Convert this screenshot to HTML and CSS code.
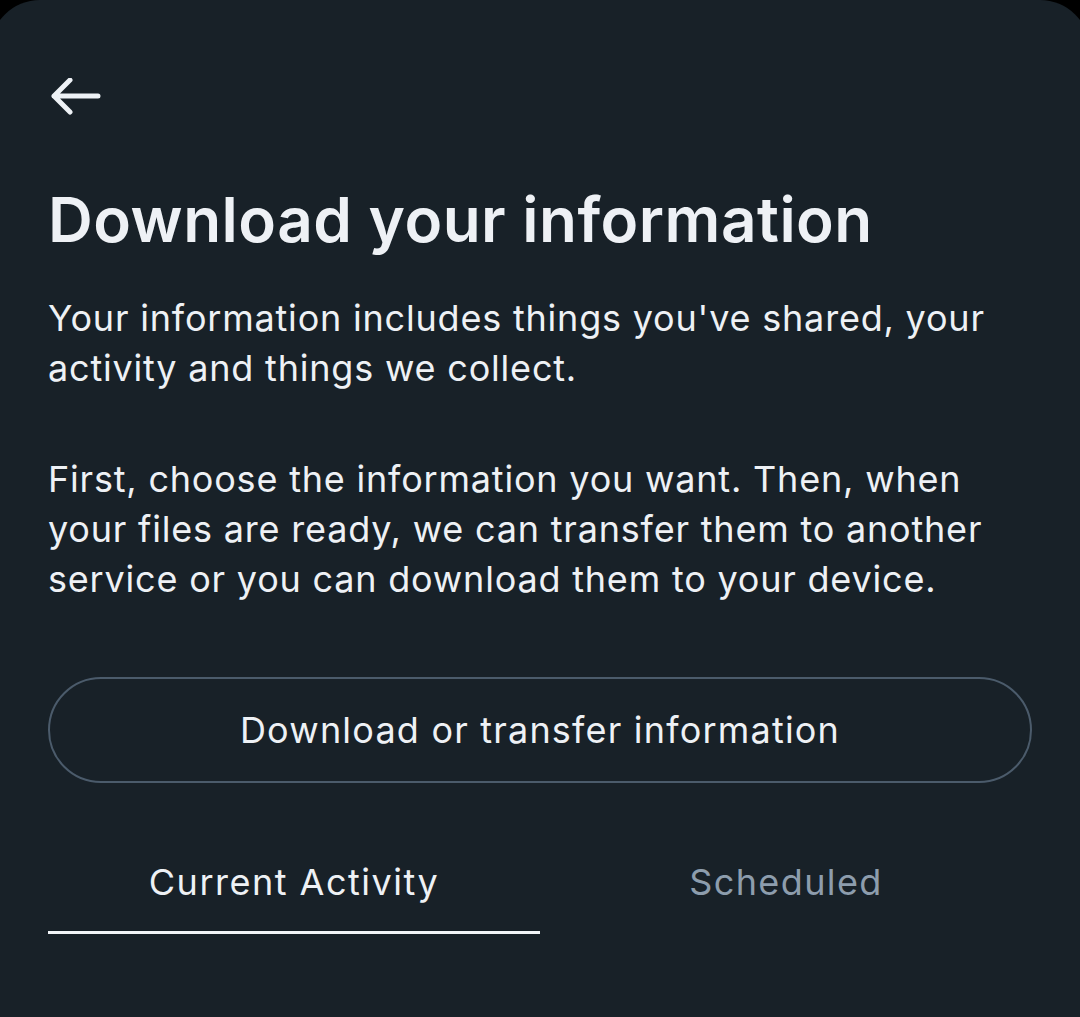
FILE: index.html
```html
<!DOCTYPE html>
<html lang="en">
<head>
<meta charset="utf-8">
<link rel="stylesheet" href="styles.css">
</head>
<body>
<div class="sheet">
  <div class="topbar">
    <svg class="back" width="52" height="40" viewBox="0 0 52 40" aria-hidden="true">
      <path d="M4 18 H48 M20 2 L4 18 L20 34" fill="none" stroke="#eef2f6" stroke-width="5" stroke-linecap="round" stroke-linejoin="round"/>
    </svg>
  </div>
  <h1 class="title">Download your information</h1>
  <p class="para">Your information includes things you've shared, your activity and things we collect.</p>
  <p class="para">First, choose the information you want. Then, when your files are ready, we can transfer them to another service or you can download them to your device.</p>
  <button class="btn">Download or transfer information</button>
  <div class="tabs">
    <div class="tab active">Current Activity</div>
    <div class="tab">Scheduled</div>
  </div>
</div>
</body>
</html>
```
FILE: styles.css
```css
html, body {
  margin: 0;
  padding: 0;
  background: #000;
  height: 100%;
  overflow: hidden;
}
.sheet {
  background: #182128;
  margin: 0 -10px;
  min-height: 1017px;
  border-radius: 50px 50px 0 0;
  padding: 0 58px 0 58px;
  font-family: "Inter", "Noto Sans", sans-serif;
  color: #eef1f5;
  box-sizing: border-box;
}
.topbar {
  padding-top: 78px;
  height: 40px;
}
.back {
  display: block;
  margin-left: 2px;
}
.title {
  margin: 62px 0 0 0;
  font-size: 62px;
  font-weight: 600;
  line-height: 80px;
  letter-spacing: 0.5px;
}
.para {
  margin: 33px 0 0 0;
  font-size: 36px;
  line-height: 50px;
  font-weight: 400;
  letter-spacing: 0.8px;
}
.para + .para {
  margin-top: 61px;
}
.btn {
  display: block;
  width: 100%;
  margin-top: 73px;
  height: 106px;
  border: 2px solid #4b5b6b;
  border-radius: 53px;
  background: transparent;
  color: #eef1f5;
  font-family: inherit;
  font-size: 36px;
  letter-spacing: 1.2px;
}
.tabs {
  display: flex;
  margin-top: 74px;
}
.tab {
  flex: 1;
  text-align: center;
  font-size: 36px;
  line-height: 50px;
  padding-bottom: 24px;
  border-bottom: 3px solid transparent;
  color: #8d9dad;
  letter-spacing: 1.4px;
}
.tab.active {
  color: #eef1f5;
  border-bottom-color: #f2f5f8;
  letter-spacing: 1.5px;
}
```
